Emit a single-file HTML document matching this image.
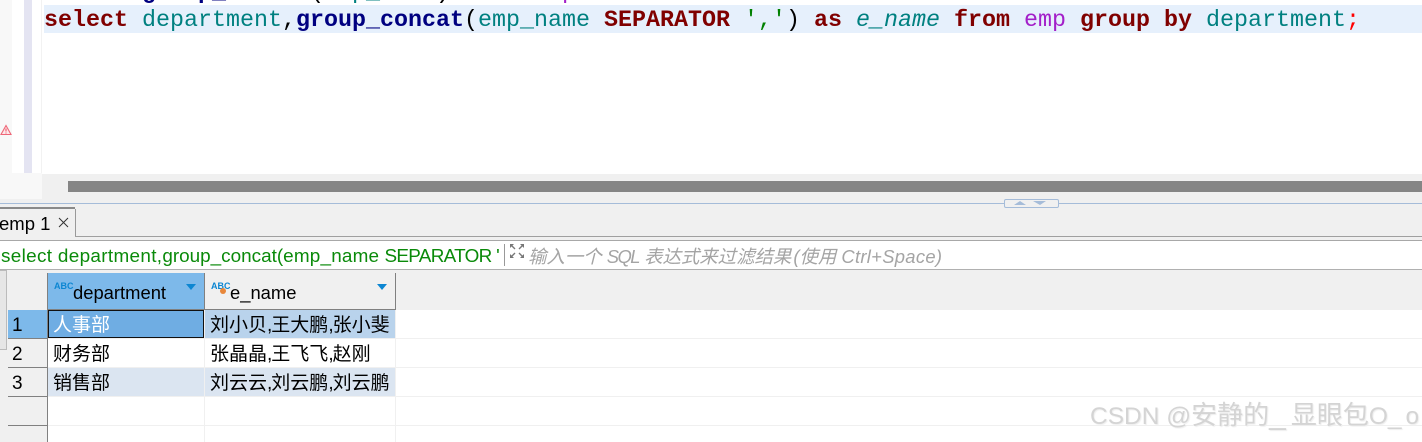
<!DOCTYPE html>
<html lang="zh">
<head>
<meta charset="utf-8">
<style>
html,body{margin:0;padding:0}
body{width:1422px;height:442px;overflow:hidden;position:relative;background:#f0f0f0;font-family:"Liberation Sans","Noto Sans CJK SC",sans-serif;color:#000}
.a{position:absolute}
.code{position:absolute;left:44px;font:23.33px/28px "Liberation Mono",monospace;white-space:pre;color:#000}
.k{color:#800000;font-weight:bold}
.f{color:#000080;font-weight:bold}
.c{color:#008080}
.t{color:#a31fc9}
.s{color:#008000}
.i{font-style:italic;color:#008080}
.cell{position:absolute;font-size:19px;line-height:28px;white-space:nowrap}
.cm{letter-spacing:-1px}
.hl{position:absolute;height:1px;background:#f0f0f0}
.vl{position:absolute;width:1px;background:#f0f0f0}
.num{position:absolute;left:12px;font-size:19px;line-height:28px}
.rl{position:absolute;left:8px;width:39px;height:2px;background:#808080}
.abc{position:absolute;font:bold 9px/9px "Liberation Sans",sans-serif;color:#0c86d2}
</style>
</head>
<body>
<!-- editor -->
<div class="a" style="left:0;top:0;width:1422px;height:174px;background:#fff"></div>
<div class="a" style="left:0;top:0;width:12px;height:174px;background:#f8f8f8"></div>
<div class="a" style="left:24px;top:0;width:8px;height:173px;background:#e4e4f2"></div>
<div class="a" style="left:41px;top:0;width:1px;height:174px;background:#f2f2f2"></div>
<div class="code" style="top:-21px"><span class="k">select</span> <span class="f">group_concat</span>(<span class="c">emp_name</span>) <span class="k">from</span> <span class="t">emp</span></div>
<div class="a" style="left:44px;top:5px;width:1378px;height:28px;background:#e6f0fc"></div>
<div class="code" style="top:7px"><span class="k">select</span> <span class="c">department</span>,<span class="f">group_concat</span>(<span class="c">emp_name</span> <span class="k">SEPARATOR</span> <span class="s">','</span>) <span class="k">as</span> <span class="i">e_name</span> <span class="k">from</span> <span class="t">emp</span> <span class="k">group</span> <span class="k">by</span> <span class="c">department</span><span style="color:#f00">;</span></div>
<svg class="a" style="left:0;top:124px" width="12" height="12" viewBox="0 0 12 12"><path d="M6 1.5 L11 10.5 H1 Z" fill="#fde8ea" stroke="#ee6677" stroke-width="1.1"/><path d="M6 4.5V7.5M6 8.5V9.5" stroke="#ee5566" stroke-width="1.1"/></svg>
<!-- scrollbar -->
<div class="a" style="left:0;top:173px;width:42px;height:26px;background:#f8f8f8"></div>
<div class="a" style="left:42px;top:174px;width:1380px;height:25px;background:#f0f0f0"></div>
<div class="a" style="left:68px;top:181px;width:1354px;height:11px;background:#858585"></div>
<!-- sash -->
<div class="a" style="left:0;top:203px;width:1422px;height:1px;background:#a5bcd9"></div>
<div class="a" style="left:1004px;top:199px;width:53px;height:7px;background:#f0f0f0;border:1px solid #a5bcd9;border-radius:2px"></div>
<svg class="a" style="left:1012px;top:200px" width="40" height="6" viewBox="0 0 40 6"><path d="M2 5 L8 1 L14 5 Z" fill="#a5bcd9"/><path d="M21 1 H34 L28 5 Z" fill="#a5bcd9"/></svg>
<!-- tab -->
<div class="a" style="left:0;top:207px;width:75px;height:2px;background:#8a8a8a"></div>
<div class="a" style="left:75px;top:209px;width:1px;height:27px;background:#999"></div>
<div class="a" style="left:75px;top:236px;width:1347px;height:1px;background:#a0a0a0"></div>
<div class="a" style="left:-1px;top:210px;font-size:18.5px;line-height:28px;white-space:nowrap">emp 1</div>
<svg class="a" style="left:58px;top:217px" width="11" height="11" viewBox="0 0 11 11"><path d="M1 1 L10 10 M10 1 L1 10" stroke="#333" stroke-width="1"/></svg>
<!-- filter bar -->
<div class="a" style="left:0;top:240px;width:1422px;height:1px;background:#a8a8a8"></div>
<div class="a" style="left:0;top:241px;width:1422px;height:28px;background:#fff"></div>
<div class="a" style="left:0;top:269px;width:1422px;height:1px;background:#b0b0b0"></div>
<div class="a" style="left:1px;top:243px;font-size:18.9px;line-height:28px;color:#0a8a0a;white-space:nowrap"><span style="letter-spacing:.33px">select department,</span>group_concat(<span style="letter-spacing:.2px">emp_name</span> <span style="letter-spacing:-.7px">SEPARATOR '</span></div>
<div class="a" style="left:504px;top:244px;width:1px;height:22px;background:#999"></div>
<svg class="a" style="left:509px;top:243px" width="16" height="16" viewBox="0 0 16 16" fill="none" stroke="#777" stroke-width="1.4"><path d="M1 1 H5 L1 5 Z M15 1 H11 L15 5 Z M1 15 H5 L1 11 Z M15 15 H11 L15 11 Z" fill="#777" stroke="none"/><path d="M2 2 L6 6 M14 2 L10 6 M2 14 L6 10 M14 14 L10 10"/></svg>
<div class="a" style="left:528px;top:243px;font-size:18.4px;line-height:28px;color:#a4a4a4;font-style:italic;white-space:nowrap">输入一个 <span style="letter-spacing:-1.5px">SQL</span> 表达式来过滤结果 <span style="margin-left:-3px">(使用 <span style="letter-spacing:.3px">Ctrl+Space)</span></span></div>
<!-- left strip -->
<div class="a" style="left:-1px;top:270px;width:6px;height:78px;background:#e6e6e6;border:1px solid #bbb"></div>
<!-- grid background -->
<div class="a" style="left:47px;top:310px;width:1375px;height:132px;background:#fff"></div>
<div class="a" style="left:396px;top:270px;width:1026px;height:40px;background:#f0f0f0"></div>
<!-- header -->
<div class="a" style="left:48px;top:273px;width:156px;height:36px;background:#7db9ea"></div>
<div class="a" style="left:47px;top:273px;width:1px;height:169px;background:#808080"></div>
<div class="a" style="left:204px;top:273px;width:1px;height:36px;background:#808080"></div>
<div class="a" style="left:395px;top:273px;width:1px;height:36px;background:#808080"></div>
<div class="a" style="left:47px;top:309px;width:349px;height:1px;background:#808080"></div>
<div class="abc" style="left:54px;top:282px">ABC</div>
<div class="a" style="left:73px;top:279px;font-size:18.4px;line-height:28px">department</div>
<svg class="a" style="left:185px;top:284px" width="12" height="7" viewBox="0 0 12 7"><path d="M1 0 H11 L6 6 Z" fill="#0c86d2"/></svg>
<div class="abc" style="left:211px;top:282px">ABC</div>
<div class="a" style="left:220px;top:288px;width:6px;height:6px;border-radius:50%;background:#e8873a"></div>
<div class="a" style="left:230px;top:279px;font-size:18.4px;line-height:28px">e_name</div>
<svg class="a" style="left:376px;top:284px" width="12" height="7" viewBox="0 0 12 7"><path d="M1 0 H11 L6 6 Z" fill="#0c86d2"/></svg>
<!-- row numbers -->
<div class="a" style="left:8px;top:310px;width:39px;height:28px;background:#7db9ea"></div>
<div class="rl" style="top:338px;height:1px"></div>
<div class="rl" style="top:367px;height:1px"></div>
<div class="rl" style="top:396px;height:1px"></div>
<div class="rl" style="top:425px;height:1px"></div>
<div class="num" style="top:312px">1</div>
<div class="num" style="top:341px">2</div>
<div class="num" style="top:370px">3</div>
<!-- rows -->
<div class="a" style="left:48px;top:310px;width:156px;height:28px;background:#6fade3;box-sizing:border-box;border:1px solid #111"></div>
<div class="a" style="left:205px;top:310px;width:190px;height:28px;background:#b9d3ec"></div>
<div class="a" style="left:48px;top:368px;width:156px;height:28px;background:#dbe5f1"></div>
<div class="a" style="left:205px;top:368px;width:190px;height:28px;background:#dbe5f1"></div>
<div class="hl" style="left:48px;top:338px;width:1374px"></div>
<div class="hl" style="left:48px;top:367px;width:1374px"></div>
<div class="hl" style="left:48px;top:396px;width:1374px"></div>
<div class="hl" style="left:48px;top:425px;width:1374px"></div>
<div class="vl" style="left:204px;top:310px;height:132px"></div>
<div class="vl" style="left:395px;top:310px;height:132px"></div>
<div class="cell" style="left:53px;top:312px;color:#fff">人事部</div>
<div class="cell" style="left:210px;top:312px">刘小贝<span class="cm">,</span>王大鹏<span class="cm">,</span>张小斐</div>
<div class="cell" style="left:53px;top:341px">财务部</div>
<div class="cell" style="left:210px;top:341px">张晶晶<span class="cm">,</span>王飞飞<span class="cm">,</span>赵刚</div>
<div class="cell" style="left:53px;top:370px">销售部</div>
<div class="cell" style="left:210px;top:370px">刘云云<span class="cm">,</span>刘云鹏<span class="cm">,</span>刘云鹏</div>
<!-- watermark -->
<div class="a" style="left:1090px;top:400px;font-size:24.5px;line-height:30px;color:#d4d4d4;white-space:nowrap;text-shadow:1px 1px 1px #eee">CSDN @<span style="font-size:26px">安静的</span><span style="font-size:30px;letter-spacing:5px">_</span><span style="font-size:26px">显眼包</span>O<span style="letter-spacing:4px">_</span>o</div>
</body>
</html>
